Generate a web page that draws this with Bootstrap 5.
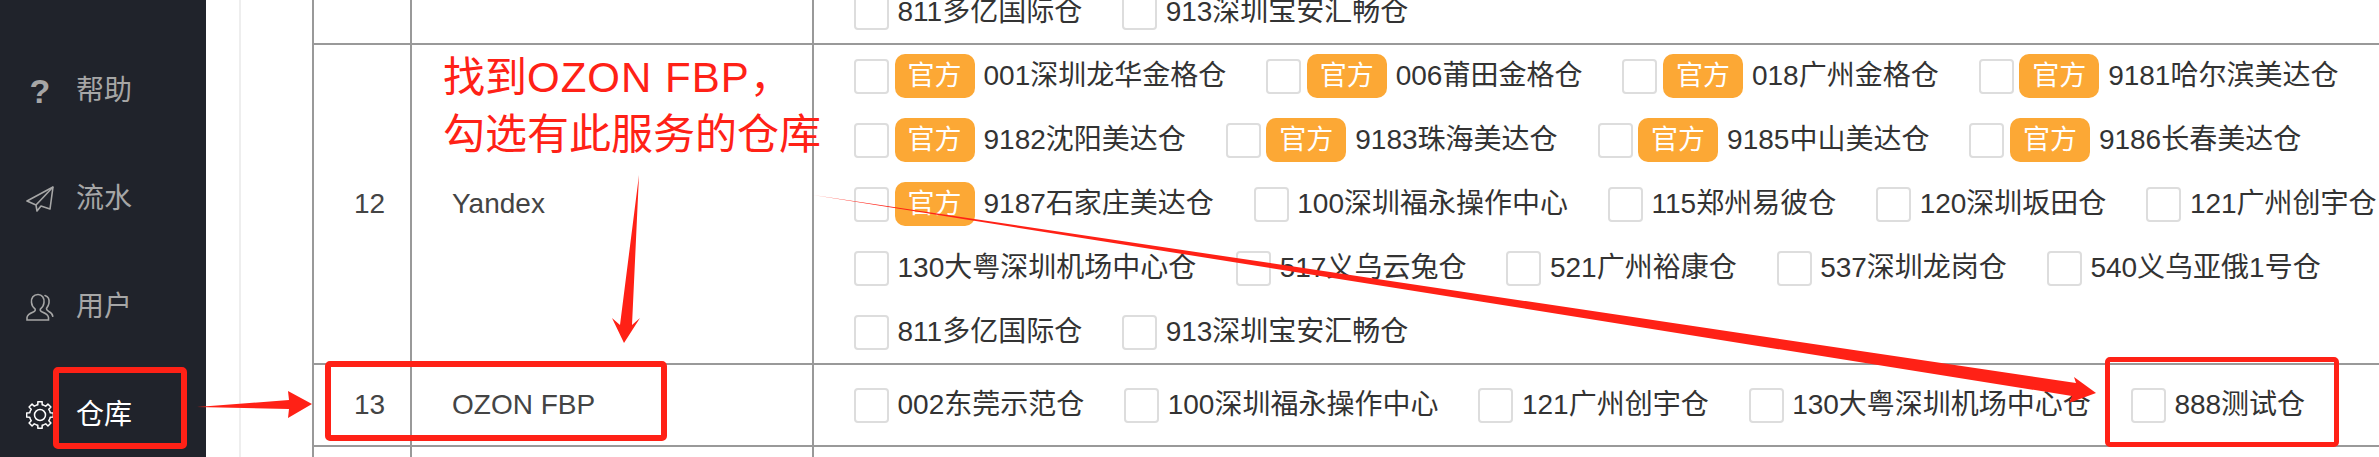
<!DOCTYPE html>
<html lang="zh-CN">
<head>
  <meta charset="UTF-8"/>
  <meta name="viewport" content="width=device-width, initial-scale=1.0"/>
  <title>仓库</title>
  <link href="https://cdn.jsdelivr.net/npm/bootstrap@5.3.2/dist/css/bootstrap.min.css" rel="stylesheet"/>
  <style>
    html, body { height: 100%; overflow: hidden; }
    body { font-family: "Liberation Sans", "Noto Sans CJK SC", sans-serif; font-size: 28px; color: #333; background: #fff; }
    .page-wrap { height: 457px; width: 2379px; overflow: hidden; position: relative; }
    .side-menu { width: 206px; background: #20232b; padding-top: 37px; flex-shrink: 0; }
    .side-item { height: 108px; padding-left: 26px; gap: 22px; color: #a6a6a6; }
    .side-item.is-active { color: #fff; }
    .side-icon { width: 28px; height: 28px; flex-shrink: 0; }
    .help-mark { font-weight: 700; font-size: 34px; line-height: 28px; text-align: center; }
    .main-area { flex: 1 1 auto; min-width: 0; padding-left: 106px; overflow: hidden; }
    .divider-line { width: 2px; background: #eee; margin-left: 33px; margin-right: -35px; flex-shrink: 0; }
    .wh-table { width: 2100px; margin: -21px 0 0; table-layout: fixed; border-collapse: collapse; }
    .wh-table td { border: 2px solid #999; padding: 9px 0 9px 40px; vertical-align: middle; color: #444; background: transparent; box-shadow: none; }
    .wh-table .col-no { width: 98px; }
    .wh-table .col-name { width: 402px; }
    .row-short td { height: 82px; }
    .row-end td { height: 30px; }
    .wh-list { column-gap: 40px; row-gap: 20px; }
    .wh-item { height: 44px; color: #333; white-space: nowrap; }
    .wh-check.form-check-input { width: 35px; height: 35px; margin: 0 8.5px 0 0; border: 2px solid #ddd; border-radius: 4px; flex-shrink: 0; }
    .official-tag { width: 80px; height: 44px; margin: 0 9px 0 -3px; padding: 0; background: #fca835; color: #fff; border-radius: 10px; font-size: 27px; font-weight: 400; line-height: 44px; }
    .note-text { position: absolute; left: 443px; top: 49px; color: #ff2116; font-size: 42px; line-height: 57px; white-space: nowrap; }
    .note-latin { letter-spacing: 1px; }
    .mark-box { position: absolute; border: 6px solid #ff2116; border-radius: 5px; }
    .box-menu { left: 53px; top: 367px; width: 134px; height: 82px; }
    .box-row { left: 325px; top: 361px; width: 342px; height: 80px; }
    .box-test { left: 2105px; top: 357px; width: 234px; height: 90px; border-width: 5px; }
    .arrow-layer { position: absolute; left: 0; top: 0; width: 2379px; height: 457px; pointer-events: none; }
  </style>
</head>
<body>
  <div class="page-wrap d-flex">
    <div class="side-menu">
      <div class="side-item d-flex align-items-center">
        <div class="side-icon help-mark">?</div><span>帮助</span>
      </div>
      <div class="side-item d-flex align-items-center">
        <svg class="side-icon" viewBox="0 0 28 26" fill="none" stroke="currentColor" stroke-width="1.6" stroke-linejoin="round">
          <path d="M27 1 1 15l9 4 1 6 4-5 9 3z"/><path d="M27 1 10 19"/>
        </svg><span>流水</span>
      </div>
      <div class="side-item d-flex align-items-center">
        <svg class="side-icon" viewBox="0 0 28 28" fill="none" stroke="currentColor" stroke-width="1.6" stroke-linecap="round">
          <path d="M12 1.500c4 0 6.500 3.500 6 8-.3 3-1.700 5-3.500 6.300-.7 1.500 0 2.500 1.700 3.200 3 1.200 6 2.600 6.300 5.500v2.500H1v-2.500c.3-2.900 3.300-4.300 6.300-5.500 1.700-.7 2.400-1.700 1.700-3.200-1.800-1.300-3.200-3.300-3.500-6.300-.5-4.500 2-8 6.500-8z"/>
          <path d="M19 2.500c3 1 4.500 4 4 7.500-.3 2.500-1.500 4-2.500 5.300-.3 1.500.5 2.200 2 3 2 1 3.900 2.200 4.300 5"/>
        </svg><span>用户</span>
      </div>
      <div class="side-item is-active d-flex align-items-center">
        <svg class="side-icon" viewBox="0 0 28 28" fill="none" stroke="currentColor" stroke-width="1.5" stroke-linejoin="round">
          <path id="gearTooth" d="M9.980 4.300 11.820 3.730 11.890.67H16.110L16.180 3.730 18.020 4.300"/>
          <use href="#gearTooth" transform="rotate(45 14 14)"/>
          <use href="#gearTooth" transform="rotate(90 14 14)"/>
          <use href="#gearTooth" transform="rotate(135 14 14)"/>
          <use href="#gearTooth" transform="rotate(180 14 14)"/>
          <use href="#gearTooth" transform="rotate(225 14 14)"/>
          <use href="#gearTooth" transform="rotate(270 14 14)"/>
          <use href="#gearTooth" transform="rotate(315 14 14)"/>
          <circle cx="14" cy="14" r="5.500"/>
        </svg><span>仓库</span>
      </div>
    </div>
    <div class="divider-line"></div>
    <div class="main-area">
      <table class="table wh-table">
        <tbody>
          <tr>
            <td class="col-no"></td>
            <td class="col-name"></td>
            <td>
              <div class="wh-list d-flex flex-wrap">
                <label class="wh-item d-flex align-items-center"><input class="form-check-input wh-check" type="checkbox"/>811多亿国际仓</label>
                <label class="wh-item d-flex align-items-center"><input class="form-check-input wh-check" type="checkbox"/>913深圳宝安汇畅仓</label>
              </div>
            </td>
          </tr>
          <tr>
            <td class="col-no">12</td>
            <td class="col-name">Yandex</td>
            <td>
              <div class="wh-list d-flex flex-wrap">
                <label class="wh-item d-flex align-items-center"><input class="form-check-input wh-check" type="checkbox"/><span class="badge official-tag">官方</span>001深圳龙华金格仓</label>
                <label class="wh-item d-flex align-items-center"><input class="form-check-input wh-check" type="checkbox"/><span class="badge official-tag">官方</span>006莆田金格仓</label>
                <label class="wh-item d-flex align-items-center"><input class="form-check-input wh-check" type="checkbox"/><span class="badge official-tag">官方</span>018广州金格仓</label>
                <label class="wh-item d-flex align-items-center"><input class="form-check-input wh-check" type="checkbox"/><span class="badge official-tag">官方</span>9181哈尔滨美达仓</label>
                <label class="wh-item d-flex align-items-center"><input class="form-check-input wh-check" type="checkbox"/><span class="badge official-tag">官方</span>9182沈阳美达仓</label>
                <label class="wh-item d-flex align-items-center"><input class="form-check-input wh-check" type="checkbox"/><span class="badge official-tag">官方</span>9183珠海美达仓</label>
                <label class="wh-item d-flex align-items-center"><input class="form-check-input wh-check" type="checkbox"/><span class="badge official-tag">官方</span>9185中山美达仓</label>
                <label class="wh-item d-flex align-items-center"><input class="form-check-input wh-check" type="checkbox"/><span class="badge official-tag">官方</span>9186长春美达仓</label>
                <label class="wh-item d-flex align-items-center"><input class="form-check-input wh-check" type="checkbox"/><span class="badge official-tag">官方</span>9187石家庄美达仓</label>
                <label class="wh-item d-flex align-items-center"><input class="form-check-input wh-check" type="checkbox"/>100深圳福永操作中心</label>
                <label class="wh-item d-flex align-items-center"><input class="form-check-input wh-check" type="checkbox"/>115郑州易彼仓</label>
                <label class="wh-item d-flex align-items-center"><input class="form-check-input wh-check" type="checkbox"/>120深圳坂田仓</label>
                <label class="wh-item d-flex align-items-center"><input class="form-check-input wh-check" type="checkbox"/>121广州创宇仓</label>
                <label class="wh-item d-flex align-items-center"><input class="form-check-input wh-check" type="checkbox"/>130大粤深圳机场中心仓</label>
                <label class="wh-item d-flex align-items-center"><input class="form-check-input wh-check" type="checkbox"/>517义乌云兔仓</label>
                <label class="wh-item d-flex align-items-center"><input class="form-check-input wh-check" type="checkbox"/>521广州裕康仓</label>
                <label class="wh-item d-flex align-items-center"><input class="form-check-input wh-check" type="checkbox"/>537深圳龙岗仓</label>
                <label class="wh-item d-flex align-items-center"><input class="form-check-input wh-check" type="checkbox"/>540义乌亚俄1号仓</label>
                <label class="wh-item d-flex align-items-center"><input class="form-check-input wh-check" type="checkbox"/>811多亿国际仓</label>
                <label class="wh-item d-flex align-items-center"><input class="form-check-input wh-check" type="checkbox"/>913深圳宝安汇畅仓</label>
              </div>
            </td>
          </tr>
          <tr class="row-short">
            <td class="col-no">13</td>
            <td class="col-name">OZON FBP</td>
            <td>
              <div class="wh-list d-flex flex-wrap">
                <label class="wh-item d-flex align-items-center"><input class="form-check-input wh-check" type="checkbox"/>002东莞示范仓</label>
                <label class="wh-item d-flex align-items-center"><input class="form-check-input wh-check" type="checkbox"/>100深圳福永操作中心</label>
                <label class="wh-item d-flex align-items-center"><input class="form-check-input wh-check" type="checkbox"/>121广州创宇仓</label>
                <label class="wh-item d-flex align-items-center"><input class="form-check-input wh-check" type="checkbox"/>130大粤深圳机场中心仓</label>
                <label class="wh-item d-flex align-items-center"><input class="form-check-input wh-check" type="checkbox"/>888测试仓</label>
              </div>
            </td>
          </tr>
          <tr class="row-end"><td class="col-no"></td><td class="col-name"></td><td></td></tr>
        </tbody>
      </table>
    </div>
    <!-- annotations drawn over the page -->
    <div class="note-text">找到<span class="note-latin">OZON FBP</span>，<br/>勾选有此服务的仓库</div>
    <div class="mark-box box-menu"></div>
    <div class="mark-box box-row"></div>
    <div class="mark-box box-test"></div>
    <svg class="arrow-layer" viewBox="0 0 2379 457">
      <g fill="#ff2116">
        <polygon points="197,407 289,400 288,391 312,404 288,418 289,409"/>
        <polygon points="639,175 632,325 640,318 624,343 612,318 620,325"/>
        <polygon points="813,195 2076,383 2074,377 2096,393 2069,403 2072,396"/>
      </g>
    </svg>
  </div>
  <script src="https://cdn.jsdelivr.net/npm/bootstrap@5.3.2/dist/js/bootstrap.bundle.min.js"></script>
</body>
</html>
